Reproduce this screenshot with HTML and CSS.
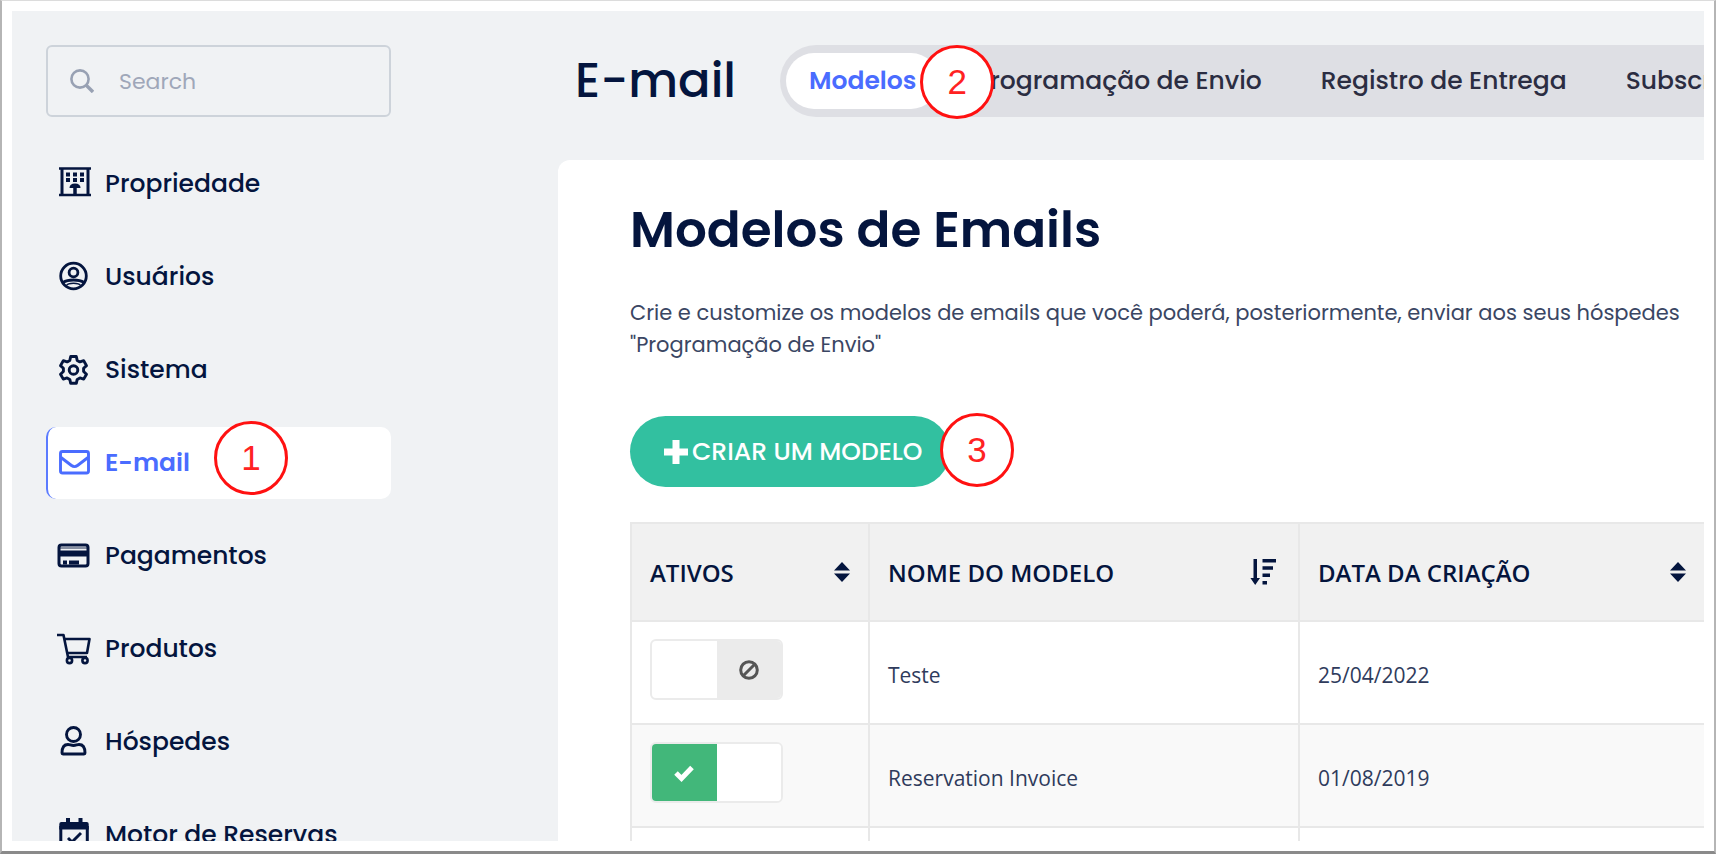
FILE: index.html
```html
<!DOCTYPE html>
<html lang="pt-BR">
<head>
  <meta charset="UTF-8">
  <title>Modelos de Emails</title>
  <link rel="stylesheet" href="styles.css">
</head>
<body>

<div class="frame">
  <div class="screen">

    <aside class="sidebar">
      <label class="search">
        <svg class="search-icon" viewBox="0 0 24 24" fill="none" stroke="currentColor">
          <circle cx="10" cy="10" r="8.6" stroke-width="2.6"/>
          <path d="M16 16l7 7" stroke-width="3.4"/>
        </svg>
        <input type="text" placeholder="Search" aria-label="Search">
      </label>

      <nav class="menu">
        <a class="menu-item" href="#">
          <svg class="icon" viewBox="0 0 34 34" fill="none" stroke="currentColor">
            <path d="M2 1.500h32M2 28h32" stroke-width="2.600"/>
            <path d="M5 2v26M31 2v26" stroke-width="3"/>
            <path d="M9 7.500h4M16 7.500h4M23 7.500h4M9 13h4M16 13h4M23 13h4" stroke-width="4"/>
            <path d="M12.500 21q0-4.500 5.500-4.500t5.500 4.500z" fill="currentColor" stroke="none"/>
            <path d="M18 19v9" stroke-width="3.500"/>
          </svg>
          Propriedade
        </a>
        <a class="menu-item" href="#">
          <svg class="icon" viewBox="0 0 34 34" fill="none" stroke="currentColor" stroke-width="2.800">
            <circle cx="16.500" cy="16" r="12.800"/>
            <circle cx="16.500" cy="12.500" r="4.400"/>
            <path d="M6 22.500c3-2 6-2.500 10.500-2.500s7.500.5 10.500 2.500"/>
            <path d="M9.500 25.500c1-2 2.500-2.300 7-2.300s6 .3 7 2.300" stroke-width="1.500"/>
          </svg>
          Usuários
        </a>
        <a class="menu-item" href="#">
          <svg class="icon" viewBox="0 0 34 34" fill="none" stroke="currentColor" stroke-width="2.900" stroke-linejoin="round">
            <path d="M13.700 3.500h5.600l.9 3.900 2.700 1.500 3.800-1.200 2.800 4.900-2.900 2.700v3.200l2.900 2.700-2.800 4.900-3.800-1.200-2.700 1.500-.9 3.900h-5.600l-.9-3.900-2.700-1.500-3.800 1.200-2.800-4.900 2.900-2.700v-3.200l-2.900-2.700 2.800-4.900 3.800 1.200 2.700-1.500z"/>
            <circle cx="16.500" cy="17" r="4.300"/>
          </svg>
          Sistema
        </a>
        <a class="menu-item active" href="#">
          <svg class="icon" viewBox="0 0 34 34" fill="none" stroke="currentColor" stroke-width="2.900">
            <rect x="3.500" y="5.500" width="28" height="21.500" rx="2"/>
            <path d="M4 11.500l10.500 8c2 1.500 4 1.500 6 0l10.500-8"/>
          </svg>
          E-mail
          <span class="step step-menu">1</span>
        </a>
        <a class="menu-item" href="#">
          <svg class="icon" viewBox="0 0 34 34" fill="none" stroke="currentColor">
            <rect x="2" y="6" width="29" height="21" rx="2.500" stroke-width="3"/>
            <path d="M2 14.500h29" stroke-width="6"/>
            <path d="M2 9h29" stroke-width="1.500" stroke-opacity=".6"/>
            <path d="M6 23.500h4M12 23.500h10" stroke-width="4"/>
          </svg>
          Pagamentos
        </a>
        <a class="menu-item" href="#">
          <svg class="icon" viewBox="0 0 34 34" fill="none" stroke="currentColor" stroke-width="2.600" stroke-linejoin="round">
            <path d="M0 3h6.500l4.500 22h19"/>
            <path d="M8 7h24.500l-2.500 14h-19.500"/>
            <circle cx="12.500" cy="28.500" r="2.600"/>
            <circle cx="28" cy="28.500" r="2.600"/>
          </svg>
          Produtos
        </a>
        <a class="menu-item" href="#">
          <svg class="icon" viewBox="0 0 34 34" fill="none" stroke="currentColor" stroke-width="2.900" stroke-linejoin="round">
            <circle cx="16.500" cy="9.500" r="7"/>
            <path d="M5 28c0-5.500 2-8.500 6-8.500 2 0 3 1 5.500 1s3.500-1 5.500-1c4 0 6 3 6 8.500q0 1-1 1h-21q-1 0-1-1z"/>
          </svg>
          Hóspedes
        </a>
        <a class="menu-item" href="#">
          <svg class="icon" viewBox="0 0 34 34" fill="none" stroke="currentColor">
            <path d="M3.800 8v23h26.500v-23" stroke-width="3"/>
            <path d="M2.300 6q0-2 2-2h25.400q2 0 2 2v5.500h-29.400z" fill="currentColor" stroke="none"/>
            <path d="M11 0v5M23.500 0v5" stroke-width="4"/>
            <path d="M11 20l4 4 9-9" stroke-width="2.900"/>
          </svg>
          Motor de Reservas
        </a>
      </nav>
    </aside>

    <main class="main">
      <header class="topbar">
        <h1>E-mail</h1>
        <nav class="tabs">
          <a class="tab active" href="#">Modelos<span class="step step-tab">2</span></a>
          <a class="tab" href="#">Programação de Envio</a>
          <a class="tab" href="#">Registro de Entrega</a>
          <a class="tab" href="#">Subscrições</a>
        </nav>
      </header>

      <section class="card">
        <h2>Modelos de Emails</h2>
        <p>Crie e customize os modelos de emails que você poderá, posteriormente, enviar aos seus hóspedes<br>"Programação de Envio"</p>

        <div class="actions">
          <button class="btn" type="button">
            <svg class="plus" viewBox="0 0 24 24" stroke="currentColor" stroke-width="7"><path d="M0 12h24M12 0v24"/></svg>
            CRIAR UM MODELO
          </button>
          <span class="step step-btn">3</span>
        </div>

        <table>
          <thead>
            <tr>
              <th class="col-active">
                <div class="th-inner">ATIVOS
                  <svg class="sort" viewBox="0 0 16 20" fill="currentColor"><path d="M0 8.500L8 0l8 8.500zM0 11.500h16L8 20z"/></svg>
                </div>
              </th>
              <th class="col-name">
                <div class="th-inner">NOME DO MODELO
                  <svg class="sort-amount" viewBox="0 0 26 26" fill="currentColor">
                    <path d="M3.500 0h3.500v19h3l-4.800 7-4.800-7h3.100z"/>
                    <path d="M12.500 0h13.500v3.500h-13.500zM12.500 7.300h10.500v3.500h-10.500zM12.500 14.600h7.500v3.500h-7.500zM12.500 22h4.500v3.500h-4.500z"/>
                  </svg>
                </div>
              </th>
              <th>
                <div class="th-inner">DATA DA CRIAÇÃO
                  <svg class="sort" viewBox="0 0 16 20" fill="currentColor"><path d="M0 8.500L8 0l8 8.500zM0 11.500h16L8 20z"/></svg>
                </div>
              </th>
            </tr>
          </thead>
          <tbody>
            <tr>
              <td>
                <label class="toggle">
                  <input type="checkbox" aria-label="Teste">
                  <span class="on"><svg viewBox="0 0 20 20" fill="none" stroke="currentColor" stroke-width="5"><path d="M2 10l5.500 5.500L18 4.500"/></svg></span>
                  <span class="off"><svg viewBox="0 0 20 20" fill="none" stroke="currentColor" stroke-width="3"><circle cx="10" cy="10" r="8.300"/><path d="M4 16L16 4"/></svg></span>
                </label>
              </td>
              <td>Teste</td>
              <td>25/04/2022</td>
            </tr>
            <tr>
              <td>
                <label class="toggle">
                  <input type="checkbox" aria-label="Reservation Invoice" checked>
                  <span class="on"><svg viewBox="0 0 20 20" fill="none" stroke="currentColor" stroke-width="5"><path d="M2 10l5.500 5.500L18 4.500"/></svg></span>
                  <span class="off"><svg viewBox="0 0 20 20" fill="none" stroke="currentColor" stroke-width="3"><circle cx="10" cy="10" r="8.300"/><path d="M4 16L16 4"/></svg></span>
                </label>
              </td>
              <td>Reservation Invoice</td>
              <td>01/08/2019</td>
            </tr>
            <tr>
              <td></td>
              <td></td>
              <td></td>
            </tr>
          </tbody>
        </table>
      </section>
    </main>

  </div>
</div>

</body>
</html>
```

FILE: styles.css
```css
* {
  box-sizing: border-box;
}

body {
  margin: 0;
  font-family: Poppins, Inter, sans-serif;
  color: #04153e;
}

a {
  color: inherit;
  text-decoration: none;
}

.frame {
  height: 100vh;
  padding: 10px;
  background: #fff;
  border: 2px solid #b5b5b5;
  border-top: 1px solid #dcdcdc;
  border-bottom: 3px solid #8a8a8a;
}

.screen {
  display: flex;
  height: 100%;
  overflow: hidden;
  background: #f0f2f4;
}

/* sidebar */
.sidebar {
  flex: none;
  width: 546px;
  padding: 34px 167px 0 34px;
}

.search {
  display: flex;
  align-items: center;
  gap: 25px;
  height: 72px;
  padding: 0 22px;
  border: 2px solid #cdd3da;
  border-radius: 6px;
  color: #98a1b3;
}

.search-icon {
  flex: none;
  width: 24px;
  height: 24px;
}

.search input {
  width: 100%;
  padding: 0;
  border: none;
  outline: none;
  background: none;
  font: 22px Poppins, Inter, sans-serif;
}

.search input::placeholder {
  color: #9fa7b9;
}

.menu {
  display: flex;
  flex-direction: column;
  gap: 21px;
  margin-top: 31px;
}

.menu-item {
  position: relative;
  display: flex;
  align-items: center;
  gap: 14px;
  height: 72px;
  padding-left: 11px;
  border-radius: 10px;
  font-size: 25px;
  font-weight: 500;
  white-space: nowrap;
}

.menu-item.active {
  padding-left: 9px;
  background: #fff;
  border-left: 2px solid #5b7bff;
  color: #4a6cff;
  font-weight: 600;
}

.icon {
  flex: none;
  width: 34px;
  height: 34px;
}

/* numbered markers */
.step {
  position: absolute;
  display: flex;
  align-items: center;
  justify-content: center;
  width: 74px;
  height: 74px;
  background: #fff;
  border: 3px solid #f11;
  border-radius: 50%;
  color: #f22;
  font: 35px "Liberation Sans", Arial, sans-serif;
}

.step-menu {
  left: 166px;
  top: -6px;
}

.step-tab {
  right: -55px;
  top: -8px;
  z-index: 1;
}

.step-btn {
  left: 310px;
  top: -3px;
}

/* main area */
.main {
  flex: 1;
  min-width: 0;
}

.topbar {
  display: flex;
  align-items: center;
  gap: 44px;
  padding: 34px 0 43px 17px;
}

.topbar h1 {
  margin: 0;
  font-size: 48px;
  font-weight: 500;
  line-height: 72px;
  white-space: nowrap;
}

.tabs {
  display: flex;
  flex: none;
  gap: 13px;
  padding: 8px 6px;
  background: #dedfe4;
  border-radius: 36px;
}

.tab {
  position: relative;
  padding: 0 23px;
  border-radius: 28px;
  color: #2b2d42;
  font-size: 25px;
  font-weight: 500;
  line-height: 56px;
  white-space: nowrap;
}

.tab.active {
  background: #fff;
  color: #4a6cff;
  font-weight: 600;
}

.card {
  min-height: 100%;
  padding: 40px 0 0 72px;
  background: #fff;
  border-radius: 12px 0 0 0;
}

.card h2 {
  margin: 0;
  font-size: 50px;
  font-weight: 600;
  line-height: 60px;
}

.card p {
  margin: 37px 0 55px;
  color: #3a4663;
  font-size: 21px;
  line-height: 32px;
  white-space: nowrap;
}

.actions {
  position: relative;
  display: flex;
  margin-bottom: 35px;
}

.btn {
  display: flex;
  align-items: center;
  gap: 4px;
  height: 71px;
  padding: 0 28px 0 34px;
  background: #32c0a0;
  border: none;
  border-radius: 36px;
  color: #fff;
  font: 500 25px Poppins, Inter, sans-serif;
}

.plus {
  width: 24px;
  height: 24px;
}

/* templates table */
table {
  width: 100%;
  table-layout: fixed;
  border-collapse: collapse;
  font-family: "Segoe UI", "Open Sans", sans-serif;
}

th, td {
  padding: 0 18px;
  border: 2px solid #e8e8e8;
  border-right: none;
  text-align: left;
}

th {
  height: 98px;
  background: #f1f1f1;
  font-size: 24px;
  font-weight: 600;
}

td {
  height: 103px;
  padding-top: 4px;
  color: #2f3b5c;
  font-size: 21px;
}

td:first-child {
  padding-top: 0;
  padding-bottom: 6px;
}

tbody tr:nth-child(even) {
  background: #f9f9f9;
}

.col-active {
  width: 238px;
}

.col-name {
  width: 430px;
}

.th-inner {
  display: flex;
  align-items: center;
  justify-content: space-between;
}

.sort {
  width: 16px;
  height: 20px;
}

.sort-amount {
  width: 26px;
  height: 26px;
  margin-right: 4px;
}

.toggle {
  position: relative;
  display: flex;
  width: 133px;
  height: 61px;
  overflow: hidden;
  background: #fff;
  border: 2px solid #ebebeb;
  border-radius: 6px;
}

.toggle input {
  position: absolute;
  opacity: 0;
}

.toggle span {
  display: flex;
  flex: 1;
  align-items: center;
  justify-content: center;
}

.toggle svg {
  width: 20px;
  height: 20px;
}

.toggle .on {
  color: #fff;
}

.toggle .off {
  background: #ebebeb;
  color: #555;
}

.toggle input:checked ~ .on {
  background: #42b77a;
}

.toggle input:checked ~ .off {
  background: #fff;
}

.toggle input:not(:checked) ~ .on svg,
.toggle input:checked ~ .off svg {
  visibility: hidden;
}
```
